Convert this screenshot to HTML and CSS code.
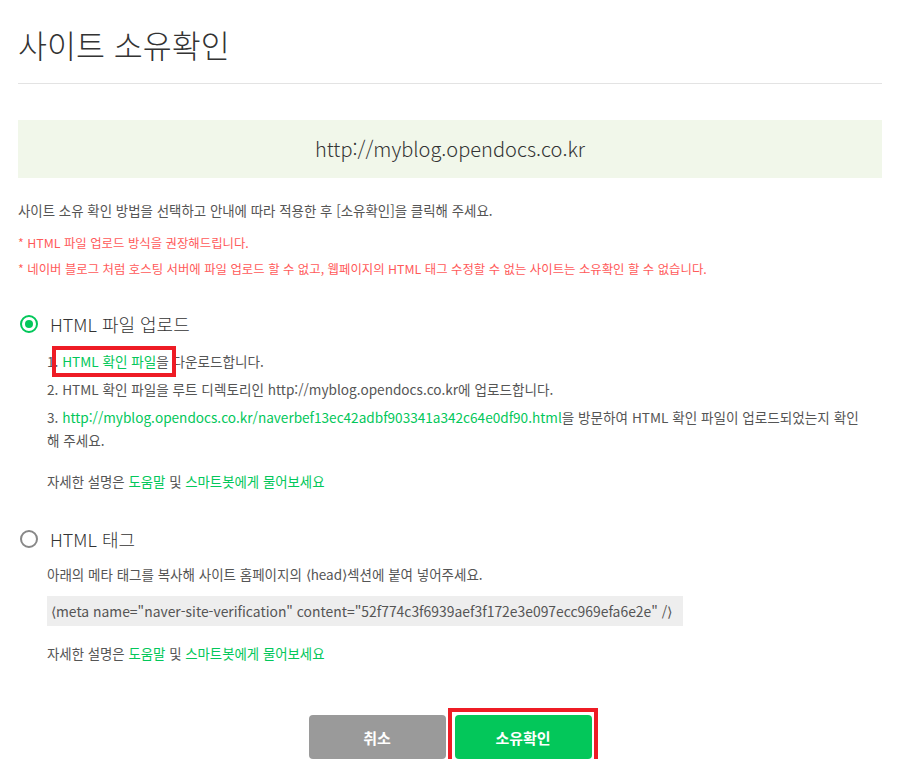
FILE: index.html
```html
<!DOCTYPE html>
<html lang="ko">
<head>
<meta charset="UTF-8" />
<title>사이트 소유확인</title>
<link rel="stylesheet" href="styles.css">
</head>
<body>

<div class="wrap">
<div class="page-head">
<h1>사이트 소유확인</h1>
</div>

<div class="site-url">http://myblog.opendocs.co.kr</div>

<p class="guide">사이트 소유 확인 방법을 선택하고 안내에 따라 적용한 후 [소유확인]을 클릭해 주세요.</p>

<ul class="notes">
<li>* HTML 파일 업로드 방식을 권장해드립니다.</li>
<li>* 네이버 블로그 처럼 호스팅 서버에 파일 업로드 할 수 없고, 웹페이지의 HTML 태그 수정할 수 없는 사이트는 소유확인 할 수 없습니다.</li>
</ul>

<div class="method">
<label class="method-title"><span class="radio checked"></span>HTML 파일 업로드</label>
<ol class="steps">
<li>1. <a href="#" class="link marked">HTML 확인 파일</a>을 다운로드합니다.</li>
<li>2. HTML 확인 파일을 루트 디렉토리인 http://myblog.opendocs.co.kr에 업로드합니다.</li>
<li>3. <a href="#" class="link">http://myblog.opendocs.co.kr/naverbef13ec42adbf903341a342c64e0df90.html</a>을 방문하여 HTML 확인 파일이 업로드되었는지 확인 해 주세요.</li>
</ol>
<p class="help">자세한 설명은 <a href="#" class="link">도움말</a> 및 <a href="#" class="link">스마트봇에게 물어보세요</a></p>
</div>

<div class="method second">
<label class="method-title"><span class="radio"></span>HTML 태그</label>
<p class="tag-guide">아래의 메타 태그를 복사해 사이트 홈페이지의 &lang;head&rang;섹션에 붙여 넣어주세요.</p>
<div class="code">&lang;meta name="naver-site-verification" content="52f774c3f6939aef3f172e3e097ecc969efa6e2e" /&rang;</div>
<p class="help after-code">자세한 설명은 <a href="#" class="link">도움말</a> 및 <a href="#" class="link">스마트봇에게 물어보세요</a></p>
</div>

<div class="actions">
<button class="btn btn-cancel">취소</button>
<button class="btn btn-confirm">소유확인</button>
</div>
</div>

</body>
</html>
```

FILE: styles.css
```css
* {
box-sizing: border-box;
}

body {
margin: 0;
background: #fff;
font-family: "Noto Sans CJK KR", "Noto Sans", sans-serif;
color: #555;
}

.wrap {
width: 864px;
margin-left: 18px;
}

.page-head {
padding-top: 24px;
padding-bottom: 19px;
border-bottom: 1px solid #e3e3e3;
}

.page-head h1 {
margin: 0;
font-size: 31.5px;
line-height: 40px;
font-weight: 300;
color: #333;
}

.site-url {
margin-top: 36px;
height: 58px;
line-height: 58px;
text-align: center;
background: #f1f7ea;
font-size: 20px;
font-weight: 300;
color: #333;
}

.guide {
margin: 22px 0 0;
font-size: 13.45px;
line-height: 20px;
}

.notes {
list-style: none;
margin: 10px 0 0;
padding: 0;
font-size: 12.4px;
line-height: 26px;
color: #ff5a5a;
}

.method {
margin-top: 30px;
padding-left: 2px;
}

.method.second {
margin-top: 34px;
}

.method-title {
display: flex;
align-items: center;
gap: 12px;
font-size: 18px;
line-height: 24px;
color: #333;
font-weight: 300;
}

.radio {
width: 18px;
height: 18px;
border: 2px solid #888;
border-radius: 50%;
display: flex;
align-items: center;
justify-content: center;
}

.radio.checked {
border-color: #03c75a;
}

.radio.checked::after {
content: "";
width: 8px;
height: 8px;
border-radius: 50%;
background: #03c75a;
}

.steps {
list-style: none;
margin: 14px 0 0;
padding: 0 14px 0 27px;
font-size: 13.6px;
line-height: 23px;
word-break: keep-all;
}

.steps li + li {
margin-top: 5px;
}

.link {
color: #03c75a;
text-decoration: none;
}

.marked {
position: relative;
}

.marked::after {
content: "";
position: absolute;
left: -10px;
right: -20px;
top: -5px;
bottom: -6px;
border: 4px solid #ee1c25;
}

.help {
margin: 18px 0 0;
padding-left: 27px;
font-size: 13.4px;
line-height: 23px;
}

.help.after-code {
margin-top: 16px;
}

.tag-guide {
margin: 12px 0 0;
padding-left: 27px;
font-size: 13.5px;
line-height: 23px;
}

.code {
margin: 10px 0 0 27px;
width: 636px;
height: 30px;
line-height: 30px;
padding-left: 4px;
background: #eee;
font-size: 13.9px;
color: #555;
}

.actions {
display: flex;
justify-content: center;
gap: 9px;
margin-top: 50px;
}

.btn {
width: 137px;
height: 44px;
border: none;
border-radius: 4px;
font-family: inherit;
font-size: 15px;
font-weight: 700;
color: #fff;
cursor: pointer;
}

.btn-cancel {
background: #9a9a9a;
}

.btn-confirm {
position: relative;
background: #03c75a;
}

.btn-confirm::after {
content: "";
position: absolute;
left: -7px;
right: -6px;
top: -7px;
bottom: -6px;
border: 4px solid #ee1c25;
}
```
